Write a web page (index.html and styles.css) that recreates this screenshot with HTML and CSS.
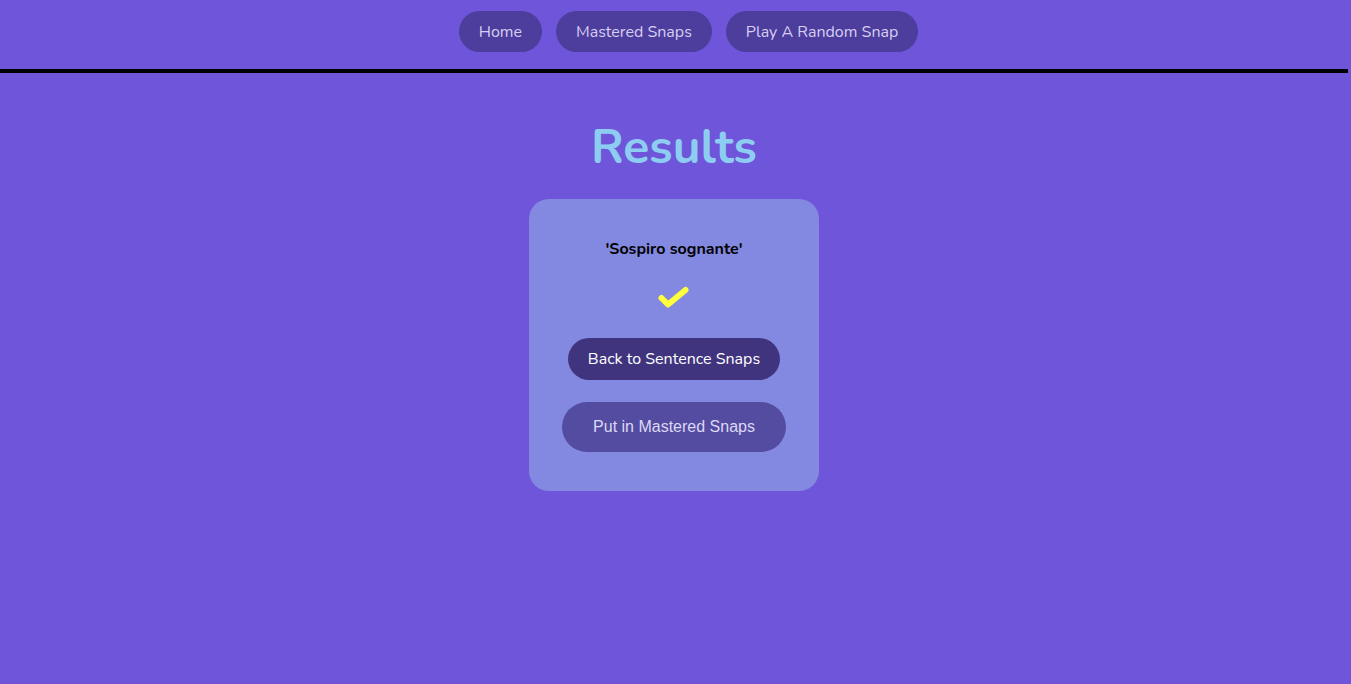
FILE: index.html
```html
<!DOCTYPE html>
<html>
<head>
<meta charset="utf-8">
<link rel="stylesheet" href="styles.css">
</head>
<body>
<div class="page">
<header class="topbar">
  <nav class="nav">
    <a class="nav-btn" href="#">Home</a>
    <a class="nav-btn" href="#">Mastered Snaps</a>
    <a class="nav-btn" href="#">Play A Random Snap</a>
  </nav>
</header>
<main class="main">
  <h1 class="title">Results</h1>
  <section class="card">
    <p class="phrase">'Sospiro sognante'</p>
    <svg class="check" width="34" height="26" viewBox="0 0 34 26">
      <path d="M4.5 13 L11 19.5 L28.5 5" fill="none" stroke="#ffff3a" stroke-width="6" stroke-linecap="round" stroke-linejoin="round"/>
    </svg>
    <button class="btn-back">Back to Sentence Snaps</button>
    <button class="btn-master">Put in Mastered Snaps</button>
  </section>
</main>
</div>
</body>
</html>
```
FILE: styles.css
```css
html, body {
  margin: 0;
  padding: 0;
}
body {
  background: #6e55d9;
  font-family: "Nunito", Lato, "Noto Sans", sans-serif;
  min-height: 684px;
}
.page {
  margin-right: 3px;
}
.topbar {
  border-bottom: 4px solid #000;
  height: 69px;
  box-sizing: content-box;
}
.nav {
  display: flex;
  justify-content: center;
  gap: 14px;
  padding-top: 11px;
  padding-left: 29px;
}
.nav-btn {
  display: flex;
  align-items: center;
  height: 41px;
  padding: 0 20px;
  border-radius: 21px;
  background: #4d3d9c;
  color: #d6cff3;
  text-decoration: none;
  font-size: 16px;
}
.main {
  display: flex;
  flex-direction: column;
  align-items: center;
}
.title {
  margin: 46px 0 0;
  height: 80px;
  line-height: 56px;
  font-size: 48px;
  font-weight: 700;
  color: #8ecdf2;
}
.card {
  width: 290px;
  height: 292px;
  box-sizing: border-box;
  background: #8389e0;
  border-radius: 20px;
  display: flex;
  flex-direction: column;
  align-items: center;
  padding-top: 39px;
}
.phrase {
  margin: 0;
  font-size: 16px;
  font-weight: 700;
  color: #000;
  line-height: 22px;
}
.check {
  margin-top: 25px;
}
.btn-back {
  margin-top: 27px;
  height: 42px;
  padding: 0 20px;
  border: none;
  border-radius: 21px;
  background: #41347f;
  color: #fff;
  font-family: "Nunito", Lato, "Noto Sans", sans-serif;
  font-size: 16px;
}
.btn-master {
  margin-top: 22px;
  height: 50px;
  padding: 0 31.5px;
  border: none;
  border-radius: 25px;
  background: #534ca0;
  color: #ddd8f5;
  font-family: "Liberation Sans", Arial, sans-serif;
  font-size: 16px;
}
```
